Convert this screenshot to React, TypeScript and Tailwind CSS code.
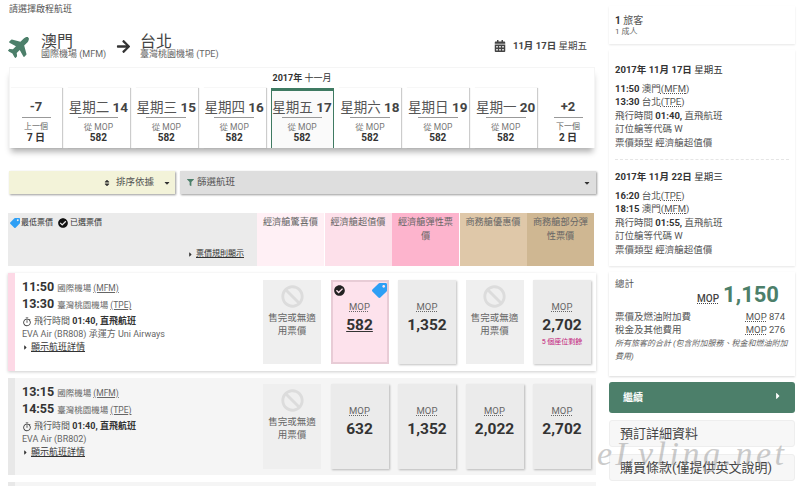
import { FaArrowRight, FaBan, FaCalendarAlt, FaCaretDown, FaCaretRight, FaCheckCircle, FaFilter, FaPlane, FaSort, FaTag } from 'react-icons/fa'
import { MdOutlineTimer } from 'react-icons/md'

const DAYS = [
  { label: '星期二', day: 14 },
  { label: '星期三', day: 15 },
  { label: '星期四', day: 16 },
  { label: '星期五', day: 17, active: true },
  { label: '星期六', day: 18 },
  { label: '星期日', day: 19 },
  { label: '星期一', day: 20 },
]

const HEADERS = [
  { name: '經濟艙驚喜價', cls: 'bg-[#fff0f5]' },
  { name: '經濟艙超值價', cls: 'bg-[#fde0ea]' },
  { name: '經濟艙彈性票價', cls: 'bg-[#fdb4cd]' },
  { name: '商務艙優惠價', cls: 'bg-[#dfc8a9]' },
  { name: '商務艙部分彈性票價', cls: 'bg-[#cfb792]' },
]

function Mop() {
  return <span className="underline decoration-dotted">MOP</span>
}

function SoldOut() {
  return (
    <div className="w-[58px] h-full bg-[#efefef] flex flex-col items-center pt-[5px] text-[#666] text-center">
      <FaBan className="text-[23px] text-[#dcdcdc]" />
      <div className="text-[9.5px] leading-[13px] mt-[3px] px-[5px]">售完或無適用票價</div>
    </div>
  )
}

function Fare({ price, selected, seats }: { price: string; selected?: boolean; seats?: string }) {
  return (
    <div
      className={
        selected
          ? 'relative w-[58px] h-full bg-[#fde2ec] border-[2px] border-[#e8ccd6] flex flex-col items-center pt-[19px] text-[#333]'
          : 'relative w-[58px] h-full bg-[#ebebeb] shadow-[1px_1px_2px_rgba(0,0,0,0.25)] flex flex-col items-center pt-[21px] text-[#333]'
      }
    >
      <div className="text-[9.5px] leading-[12px] text-[#666]">
        <Mop />
      </div>
      <div className={selected ? 'text-[15.5px] leading-[20px] font-bold mt-[1.5px] underline' : 'text-[15.5px] leading-[20px] font-bold mt-[1.5px]'}>
        {price}
      </div>
      {seats && <div className="text-[7px] leading-[10px] mt-[2px] text-[#c2187a] whitespace-nowrap">{seats}</div>}
      {selected && (
        <>
          <FaCheckCircle className="absolute left-[1px] top-[3px] text-[11px] text-[#222]" />
          <FaTag className="absolute right-0 top-[1px] text-[15px] text-[#2e9ff5] -scale-x-100" />
        </>
      )}
    </div>
  )
}

function FlightRow({
  dep,
  arr,
  carrier,
  alt,
  children,
}: {
  dep: string
  arr: string
  carrier: string
  alt?: boolean
  children: React.ReactNode
}) {
  return (
    <div
      className={
        alt
          ? 'h-[97px] bg-[#f5f5f5] border-l-[7px] border-[#e8e8e8] flex'
          : 'h-[98px] bg-white border-l-[7px] border-[#fdd9e6] shadow-[0_1px_3px_rgba(0,0,0,0.2)] flex'
      }
    >
      <div className="w-[242px] pl-[7px] pt-[5px]">
        <div className="flex items-baseline gap-[3px] h-[17px]">
          <span className="text-[12.5px] font-bold text-[#333]">{dep}</span>
          <span className="text-[8.5px] text-[#666]">
            國際機場 <span className="underline">(MFM)</span>
          </span>
        </div>
        <div className="flex items-baseline gap-[3px] h-[17px]">
          <span className="text-[12.5px] font-bold text-[#333]">{arr}</span>
          <span className="text-[8.5px] text-[#666]">
            臺灣桃園機場 <span className="underline">(TPE)</span>
          </span>
        </div>
        <div className="flex items-center gap-[2px] text-[9px] leading-[13px] text-[#555] mt-[3px]">
          <MdOutlineTimer className="text-[10px] text-[#333]" />
          <span>
            飛行時間 <b className="text-[#333]">01:40, 直飛航班</b>
          </span>
        </div>
        <div className="text-[9px] leading-[12px] text-[#666]">{carrier}</div>
        <div className="flex items-center text-[9px] leading-[13px] text-[#333] mt-[0.5px]">
          <FaCaretRight className="text-[7px] mr-[2px]" />
          <span className="underline">顯示航班詳情</span>
        </div>
      </div>
      <div className={alt ? 'flex-1 flex gap-[9.5px] pl-[6px] py-[6px]' : 'flex-1 flex gap-[9.5px] pl-[6px] py-[7px]'}>{children}</div>
    </div>
  )
}

function Leg({ date, week, from, code, to, toCode, dep, arr, duration }: Record<string, string>) {
  return (
    <div className="text-[9.5px] leading-[13.5px] text-[#555]">
      <div className="text-[#333] mb-[5px]">
        <b>{date}</b> {week}
      </div>
      <div>
        <b className="text-[#333]">{dep}</b> {from}
        <span className="underline decoration-dotted">({code})</span>
      </div>
      <div>
        <b className="text-[#333]">{arr}</b> {to}
        <span className="underline decoration-dotted">({toCode})</span>
      </div>
      <div>
        飛行時間 <b className="text-[#333]">{duration},</b> 直飛航班
      </div>
      <div>訂位艙等代碼 W</div>
      <div>票價類型 經濟艙超值價</div>
    </div>
  )
}

export default function App() {
  return (
    <div
      className="relative w-[800px] h-[486px] overflow-hidden bg-white flex gap-[13px] pl-[8px] text-[#333]"
      style={{ fontFamily: 'Roboto, "Noto Sans CJK TC", sans-serif' }}
    >
      <div className="w-[588px] shrink-0">
        <div className="text-[9px] leading-[12px] text-[#555] pt-[3px] pl-[1px]">請選擇啟程航班</div>

        <div className="flex items-center h-[32px] mt-[15px]">
          <FaPlane className="text-[24px] text-[#4c7f6a] -rotate-45" />
          <div className="ml-[9px] w-[75px]">
            <div className="text-[16px] leading-[16px] text-[#444]">澳門</div>
            <div className="text-[9px] leading-[9px] text-[#666]">國際機場 (MFM)</div>
          </div>
          <FaArrowRight className="text-[15px] text-[#333]" />
          <div className="ml-[9px]">
            <div className="text-[16px] leading-[16px] text-[#444]">台北</div>
            <div className="text-[9px] leading-[9px] text-[#666]">臺灣桃園機場 (TPE)</div>
          </div>
          <div className="ml-auto mr-[9px] flex items-center text-[9.5px] text-[#444]">
            <FaCalendarAlt className="text-[12px] mr-[7px]" />
            <b>11月 17日</b>&nbsp;星期五
          </div>
        </div>

        <div className="mt-[5px] ml-[1px] w-[586px] h-[81px] border border-[#f5f5f5] border-b-0 shadow-[0_6px_6px_-2px_rgba(0,0,0,0.3)] flex flex-col">
          <div className="h-[20px] shrink-0 text-[9px] leading-[20px] text-center">
            <b>2017年</b> 十一月
          </div>
          <div className="flex-1 flex justify-between">
            <div className="w-[52px] shadow-[1px_0_1px_rgba(0,0,0,0.2)] flex flex-col items-center pt-[12px]">
              <b className="text-[13px] leading-[14px] text-[#444]">-7</b>
              <div className="w-[29px] h-px bg-[#999] mt-[3px]" />
              <span className="text-[8px] leading-[12px] mt-[3px] text-[#666]">上一個</span>
              <b className="text-[10px] leading-[10px]">7 日</b>
            </div>
            {DAYS.map((d) => (
              <div
                key={d.day}
                className={
                  d.active
                    ? 'w-[63px] bg-[#fafafa] border-t-[3px] border-l border-r border-[#3f7a62] flex flex-col items-center pt-[9px]'
                    : 'w-[63px] shadow-[1px_0_1px_rgba(0,0,0,0.2)] flex flex-col items-center pt-[12px]'
                }
              >
                <div className="text-[13.5px] leading-[14px] text-[#555] whitespace-nowrap">
                  {d.label} <b className="text-[#444]">{d.day}</b>
                </div>
                <div className="w-[40px] h-px bg-[#999] mt-[3px]" />
                <span className="text-[8.5px] leading-[12px] mt-[3px] text-[#777]">從 MOP</span>
                <b className="text-[10px] leading-[10px]">582</b>
              </div>
            ))}
            <div className="w-[52px] flex flex-col items-center pt-[12px]">
              <b className="text-[13px] leading-[14px] text-[#444]">+2</b>
              <div className="w-[29px] h-px bg-[#999] mt-[3px]" />
              <span className="text-[8px] leading-[12px] mt-[3px] text-[#666]">下一個</span>
              <b className="text-[10px] leading-[10px]">2 日</b>
            </div>
          </div>
        </div>

        <div className="flex gap-[5px] mt-[23px] ml-[1px]">
          <div className="w-[166px] h-[23px] bg-[#f3f3d9] shadow-[1px_1px_2px_rgba(0,0,0,0.4)] flex items-center justify-end text-[9.5px] text-[#555]">
            <FaSort className="text-[8px] text-[#333] mr-[5px]" />
            排序依據
            <FaCaretDown className="text-[8px] text-[#333] ml-[9px] mr-[4px]" />
          </div>
          <div className="flex-1 h-[23px] bg-[#dedede] shadow-[1px_1px_2px_rgba(0,0,0,0.4)] flex items-center text-[9.5px] text-[#555] pl-[7px]">
            <FaFilter className="text-[7px] text-[#4c7f6a] mr-[3px]" />
            篩選航班
            <FaCaretDown className="text-[8px] text-[#333] ml-auto mr-[5px]" />
          </div>
        </div>

        <div className="flex h-[53px] mt-[19px]">
          <div className="w-[249px] bg-[#ebebeb] flex flex-col justify-between pt-[4px] pb-[6px] pl-[2px] text-[8px] text-[#333]">
            <div className="flex items-center">
              <FaTag className="text-[10px] text-[#2e9ff5] -scale-x-100 mr-[1px]" />
              最低票價
              <FaCheckCircle className="text-[10px] text-[#111] ml-[5px] mr-[2px]" />
              已選票價
            </div>
            <div className="flex items-center justify-end pr-[13px]">
              <FaCaretRight className="text-[7px] mr-[2px]" />
              <span className="underline">票價規則顯示</span>
            </div>
          </div>
          {HEADERS.map((h) => (
            <div key={h.name} className={'w-[67px] pt-[2px] px-[2px] mr-[0.5px] text-[9.2px] leading-[14px] text-center text-[#666] ' + h.cls}>
              {h.name}
            </div>
          ))}
        </div>

        <div className="mt-[7px] flex flex-col gap-[7px]">
          <FlightRow dep="11:50" arr="13:30" carrier="EVA Air (BR808) 承運方 Uni Airways">
            <SoldOut />
            <Fare price="582" selected />
            <Fare price="1,352" />
            <SoldOut />
            <Fare price="2,702" seats="5 個座位剩餘" />
          </FlightRow>
          <FlightRow alt dep="13:15" arr="14:55" carrier="EVA Air (BR802)">
            <SoldOut />
            <Fare price="632" />
            <Fare price="1,352" />
            <Fare price="2,022" />
            <Fare price="2,702" />
          </FlightRow>
          <div className="h-[10px] bg-[#f5f5f5] border-l-[7px] border-[#e8e8e8]" />
        </div>
      </div>

      <div className="w-[186px] shrink-0 pt-[6px] flex flex-col gap-[6px]">
        <div className="h-[38px] shadow-[0_1px_2px_rgba(0,0,0,0.1)] px-[6px] pt-[8px]">
          <div className="text-[10px] leading-[13px] text-[#555]">
            <b className="text-[#333]">1</b> 旅客
          </div>
          <div className="text-[8px] leading-[10px] text-[#666]">1 成人</div>
        </div>

        <div className="h-[216px] shadow-[0_1px_2px_rgba(0,0,0,0.1)] px-[6px] pt-[13px]">
          <Leg date="2017年 11月 17日" week="星期五" dep="11:50" from="澳門" code="MFM" arr="13:30" to="台北" toCode="TPE" duration="01:40" />
          <div className="border-t border-dashed border-[#e5e5e5] my-[10px]" />
          <Leg date="2017年 11月 22日" week="星期三" dep="16:20" from="台北" code="TPE" arr="18:15" to="澳門" toCode="MFM" duration="01:55" />
        </div>

        <div className="h-[104px] shadow-[0_1px_2px_rgba(0,0,0,0.15)] px-[6px] pt-[5px] text-[9.5px] leading-[13.5px] text-[#555]">
          <div>總計</div>
          <div className="flex items-baseline justify-end pr-[10px] mt-[-7px] h-[24px]">
            <span className="underline decoration-dotted text-[10px] font-medium text-[#444] mr-[4px]">MOP</span>
            <b className="text-[22px] leading-[22px] text-[#4c7f6a]">1,150</b>
          </div>
          <div className="flex justify-between mt-[2px] pr-[4px]">
            <span>票價及燃油附加費</span>
            <span><Mop /> 874</span>
          </div>
          <div className="flex justify-between pr-[4px]">
            <span>稅金及其他費用</span>
            <span><Mop /> 276</span>
          </div>
          <div className="text-[8px] leading-[13.5px] italic text-[#666]">所有旅客的合計 (包含附加服務、稅金和燃油附加費用)</div>
        </div>

        <div className="h-[31px] rounded-[3px] bg-[#4c7f6a] flex items-center justify-between text-[10px] font-bold text-white pl-[14px] pr-[12px]">
          繼續
          <FaCaretRight className="text-[10px] mb-[3px]" />
        </div>
        <div className="h-[27px] rounded-[3px] bg-[#f7f7f7] border border-[#eee] flex items-center text-[13px] text-[#444] pl-[10px] mt-[1px]">預訂詳細資料</div>
        <div className="h-[27px] rounded-[3px] bg-[#f7f7f7] border border-[#eee] flex items-center text-[13px] text-[#444] pl-[10px] mt-[1px]">購買條款(僅提供英文說明)</div>
      </div>

      <div className="absolute left-[597px] top-[436px] text-[34px] leading-[36px] italic tracking-[3.5px] text-[#999] opacity-50 whitespace-nowrap" style={{ fontFamily: '"Liberation Serif", serif' }}>
        eLvling.net
      </div>
    </div>
  )
}
